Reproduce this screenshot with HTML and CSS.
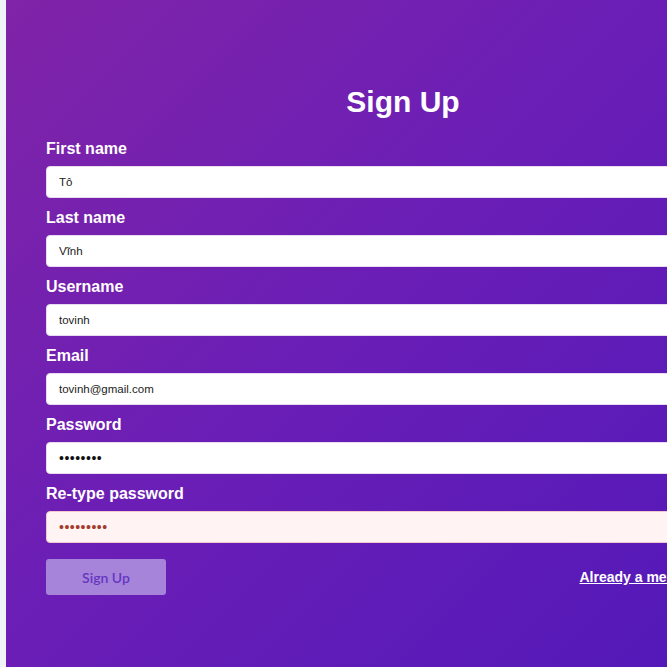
FILE: index.html
```html
<!DOCTYPE html>
<html lang="vi">
<head>
<meta charset="utf-8">
<title>Sign Up</title>
<link rel="stylesheet" href="styles.css">
</head>
<body>
<div class="page">
  <div class="strip"></div>
  <main class="panel">
    <h1 class="title">Sign Up</h1>
    <form class="form">
      <div class="field">
        <label class="label">First name</label>
        <input class="input" type="text" value="Tô">
      </div>
      <div class="field">
        <label class="label">Last name</label>
        <input class="input" type="text" value="Vĩnh">
      </div>
      <div class="field">
        <label class="label">Username</label>
        <input class="input" type="text" value="tovinh">
      </div>
      <div class="field">
        <label class="label">Email</label>
        <input class="input" type="text" value="tovinh@gmail.com">
      </div>
      <div class="field">
        <label class="label">Password</label>
        <input class="input input-pass" type="password" value="12345678">
      </div>
      <div class="field">
        <label class="label">Re-type password</label>
        <input class="input input-pass input-error" type="password" value="123456789">
      </div>
      <div class="actions">
        <button class="btn" type="button">Sign Up</button>
        <a class="link" href="#">Already a member? Sign in</a>
      </div>
    </form>
  </main>
</div>
</body>
</html>
```
FILE: styles.css
```css
html, body {
  margin: 0;
  padding: 0;
  overflow: hidden;
  width: 667px;
  height: 667px;
}
body {
  background: #f0f3f8;
  font-family: "Liberation Sans", Arial, sans-serif;
}
.page {
  display: flex;
  width: 800px;
  height: 667px;
}
.strip {
  width: 6px;
  flex: none;
  background: #f0f3f8;
}
.panel {
  width: 714px;
  flex: none;
  padding: 0 40px;
  background: linear-gradient(135deg, #8024a8 0%, #6a1eb6 45%, #4f18b9 100%);
  color: #fff;
}
.title {
  margin: 0;
  padding-top: 84px;
  font-size: 30px;
  line-height: 36px;
  text-align: center;
  font-weight: bold;
}
.form {
  display: flex;
  flex-direction: column;
  margin-top: 20px;
}
.field {
  display: flex;
  flex-direction: column;
  margin-bottom: 11px;
}
.label {
  font-size: 16px;
  font-weight: bold;
  line-height: 18px;
  margin-bottom: 8px;
}
.input {
  box-sizing: border-box;
  height: 32px;
  width: 100%;
  border: 1px solid #e9dcf2;
  border-radius: 4px;
  background: #fff;
  padding: 0 12px;
  font-family: "Liberation Sans", Arial, sans-serif;
  font-size: 11.5px;
  color: #222;
  outline: none;
}
.input-pass {
  font-size: 14px;
  letter-spacing: 0.5px;
  color: #111;
}
.input-error {
  background: #fff4f3;
  color: #a33a2e;
  border-color: #f3c9cf;
}
.actions {
  display: flex;
  justify-content: space-between;
  align-items: center;
  margin-top: 5px;
}
.btn {
  width: 120px;
  height: 36px;
  border: none;
  border-radius: 3px;
  background: #a584d9;
  color: #6636c2;
  font-family: Lato, "Liberation Sans", sans-serif;
  font-size: 14px;
  font-weight: 600;
  cursor: pointer;
}
.link {
  color: #fff;
  font-weight: bold;
  font-size: 14px;
  text-decoration: underline;
}
```
